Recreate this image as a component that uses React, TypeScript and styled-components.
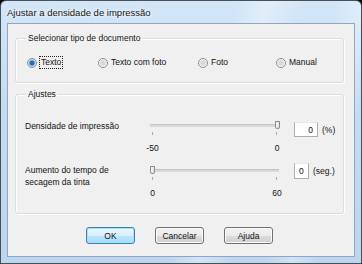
import React from 'react';
import styled, { createGlobalStyle } from 'styled-components';

const GlobalStyle = createGlobalStyle`
  html, body {
    margin: 0;
    padding: 0;
    background: #000;
  }
  body {
    font-family: "Liberation Sans", Arial, sans-serif;
  }
`

const Window = styled.div`
  width: 362px;
  height: 264px;
  box-sizing: border-box;
  border: 1px solid #4a4f55;
  border-radius: 6px 6px 0 0;
  background:
    linear-gradient(105deg, transparent 0 55%, rgba(255,255,255,0.35) 62%, transparent 70% 78%, rgba(255,255,255,0.3) 84%, transparent 90%),
    linear-gradient(180deg, #d3e6f8 0%, #c4dcf3 40%, #bcd6f0 100%);
  padding: 0 6px 6px 6px;
  display: flex;
  flex-direction: column;
`

const TitleBar = styled.div`
  height: 22px;
  flex: none;
  display: flex;
  align-items: center;
  font-size: 9.5px;
  color: #111;
  text-shadow: 0 0 4px #fff, 0 0 2px #fff;
`

const Client = styled.div`
  flex: 1;
  box-sizing: border-box;
  background: #f0f0f0;
  border: 1px solid #8ea6bf;
  padding: 9px 10px 0 7px;
  display: flex;
  flex-direction: column;
  gap: 6px;
`

const Group = styled.fieldset<{ $h: number }>`
  flex: none;
  margin: 0;
  height: ${p => p.$h}px;
  box-sizing: border-box;
  border: 1px solid #dcdcdc;
  border-radius: 3px;
  box-shadow: inset 1px 1px 0 #fff, 1px 1px 0 #fff;
  padding: 0 9px;
  min-width: 0;
`

const Legend = styled.legend`
  font-size: 8.5px;
  color: #111;
  padding: 0 2px;
  margin-left: 1px;
  line-height: 11px;
`

const RadioRow = styled.div`
  display: grid;
  grid-template-columns: 71px 100px 78px 1fr;
  padding-left: 2px;
  margin-top: 13px;
`

const RadioItem = styled.label`
  display: flex;
  align-items: center;
  gap: 3px;
  font-size: 8.5px;
  line-height: 11px;
  color: #111;
`

const RadioDot = styled.span<{ $on?: boolean }>`
  width: 8px;
  height: 8px;
  border-radius: 50%;
  border: 1px solid #8c8c8c;
  background: ${p => p.$on
    ? 'radial-gradient(circle, #2a6bb8 0 2px, #9cc3ea 3px, #e9eef3 4px)'
    : 'radial-gradient(circle, #d8d8d8 0 2px, #e8e8e8 3px, #f8f8f8 4px)'};
  flex: none;
`

const Focus = styled.span`
  outline: 1px dotted #222;
  padding: 0 1px;
`

const SettingRow = styled.div`
  display: grid;
  grid-template-columns: 125px 135px 1fr;
  align-items: start;
  height: 45px;
`

const RowLabel = styled.div<{ $top: number }>`
  font-size: 8.5px;
  line-height: 12px;
  color: #111;
  margin-top: ${p => p.$top}px;
`

const SliderBox = styled.div`
  position: relative;
  width: 129px;
  height: 34px;
`

const Track = styled.div`
  margin-top: 3px;
  height: 2px;
  background: #d9d9d9;
  border-top: 1px solid #c4c4c4;
`

const Thumb = styled.div<{ $left: number }>`
  position: absolute;
  top: 0;
  left: ${p => p.$left}px;
  width: 5px;
  height: 8px;
  box-sizing: border-box;
  border: 1px solid #8a8a8a;
  border-radius: 1px 1px 3px 3px;
  background: linear-gradient(90deg, #fafafa, #e2e2e2);
`

const Ticks = styled.div`
  display: flex;
  justify-content: space-between;
  padding: 0 2px;
  margin-top: 5px;
  height: 3px;

  span {
    width: 1px;
    background: #a8a8a8;
  }
`

const TickLabels = styled.div`
  display: flex;
  justify-content: space-between;
  padding: 0 2px 0 2.5px;
  margin-top: 8px;
  font-size: 8.5px;
  line-height: 11px;
  color: #111;

  span {
    width: 0;
    display: flex;
    justify-content: center;
    white-space: nowrap;
  }
`

const ValueCell = styled.div<{ $top: number }>`
  display: flex;
  align-items: center;
  gap: 4px;
  margin-top: ${p => p.$top}px;
  margin-left: 9px;
  font-size: 8.5px;
  color: #111;
  white-space: nowrap;
`

const Box = styled.div<{ $w: number; $h: number; $align: string }>`
  width: ${p => p.$w}px;
  height: ${p => p.$h}px;
  box-sizing: border-box;
  border: 1px solid #abadb3;
  border-top-color: #e3e9ef;
  background: #fff;
  display: flex;
  align-items: center;
  justify-content: ${p => p.$align};
  padding: 0 4px;
  font-size: 8.5px;
`

const Buttons = styled.div`
  display: flex;
  justify-content: center;
  gap: 20px;
  margin-top: 7px;
`

const Button = styled.button<{ $default?: boolean }>`
  width: 49px;
  height: 17px;
  box-sizing: border-box;
  border: 1px solid ${p => (p.$default ? '#3c7fb1' : '#707070')};
  border-radius: 3px;
  background: ${p => p.$default
    ? 'linear-gradient(180deg, #eaf6fd 0%, #d9f0fc 50%, #bee6fd 51%, #a7d9f5 100%)'
    : 'linear-gradient(180deg, #f2f2f2 0%, #ebebeb 50%, #dddddd 51%, #cfcfcf 100%)'};
  box-shadow: inset 0 0 0 1px ${p => (p.$default ? '#9fe4fb' : '#fcfcfc')};
  font-family: "Liberation Sans", Arial, sans-serif;
  font-size: 8.5px;
  color: #111;
  padding: 0;
`

interface SliderProps {
  value: number;
  min: string;
  max: string;
}

const Slider: React.FC<SliderProps> = ({ value, min, max }) => (
  <SliderBox>
    <Track />
    <Thumb $left={value} />
    <Ticks><span /><span /></Ticks>
    <TickLabels><span>{min}</span><span>{max}</span></TickLabels>
  </SliderBox>
)

const App: React.FC = () => {
  return (
    <>
      <GlobalStyle />
      <Window>
        <TitleBar>Ajustar a densidade de impressão</TitleBar>
        <Client>
          <Group $h={50}>
            <Legend>Selecionar tipo de documento</Legend>
            <RadioRow>
              <RadioItem><RadioDot $on /><Focus>Texto</Focus></RadioItem>
              <RadioItem><RadioDot />Texto com foto</RadioItem>
              <RadioItem><RadioDot />Foto</RadioItem>
              <RadioItem><RadioDot />Manual</RadioItem>
            </RadioRow>
          </Group>
          <Group $h={125}>
            <Legend>Ajustes</Legend>
            <div style={{ marginTop: 21 }}>
              <SettingRow>
                <RowLabel $top={-1}>Densidade de impressão</RowLabel>
                <Slider value={125} min="-50" max="0" />
                <ValueCell $top={1}>
                  <Box $w={24} $h={15} $align="flex-end">0</Box>(%)
                </ValueCell>
              </SettingRow>
              <SettingRow>
                <RowLabel $top={-2}>Aumento do tempo de<br />secagem da tinta</RowLabel>
                <Slider value={0} min="0" max="60" />
                <ValueCell $top={-3}>
                  <Box $w={15} $h={16} $align="flex-start">0</Box>(seg.)
                </ValueCell>
              </SettingRow>
            </div>
          </Group>
          <Buttons>
            <Button $default>OK</Button>
            <Button>Cancelar</Button>
            <Button>Ajuda</Button>
          </Buttons>
        </Client>
      </Window>
    </>
  );
}
export default App;
